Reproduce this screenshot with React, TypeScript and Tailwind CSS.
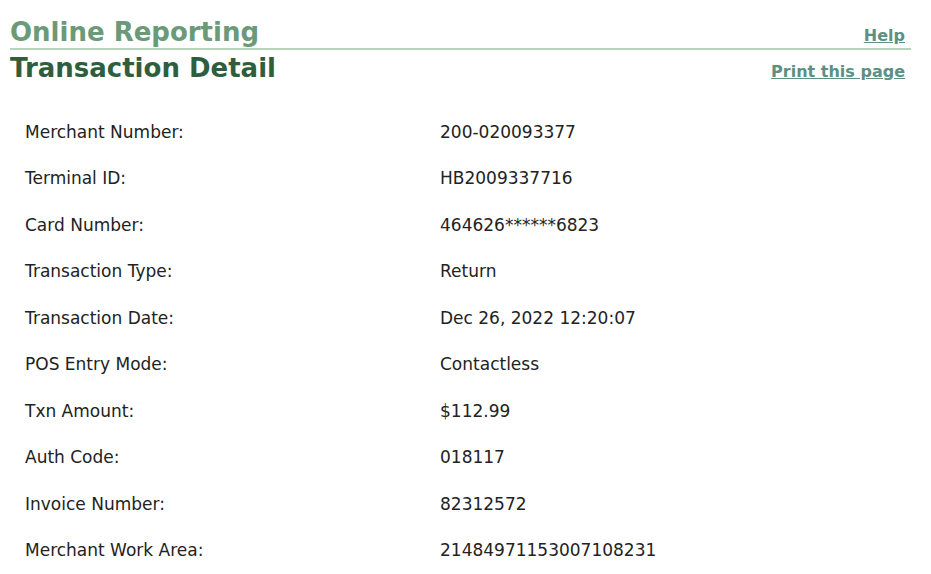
import React from "react";

const rows: [string, string][] = [
  ["Merchant Number:", "200-020093377"],
  ["Terminal ID:", "HB2009337716"],
  ["Card Number:", "464626******6823"],
  ["Transaction Type:", "Return"],
  ["Transaction Date:", "Dec 26, 2022 12:20:07"],
  ["POS Entry Mode:", "Contactless"],
  ["Txn Amount:", "$112.99"],
  ["Auth Code:", "018117"],
  ["Invoice Number:", "82312572"],
  ["Merchant Work Area:", "21484971153007108231"],
];

export default function App() {
  return (
    <div className="w-[931px] h-[574px] bg-white overflow-hidden font-['DejaVu_Sans',Verdana,sans-serif]">
      <div className="ml-[10px] w-[901px] pt-[17px]">
        <div className="flex items-baseline justify-between border-b-2 border-[#b7d4bb] h-[33px]">
          <h1 className="text-[26px] leading-[30px] font-bold text-[#6b9a78]">
            Online Reporting
          </h1>
          <a
            href="#"
            className="mr-[6px] text-[16px] font-bold text-[#5d8f82] underline"
          >
            Help
          </a>
        </div>
        <div className="flex items-baseline justify-between mt-[3px]">
          <h2 className="text-[26px] leading-[30px] font-bold text-[#2f5e3e]">
            Transaction Detail
          </h2>
          <a
            href="#"
            className="mr-[6px] text-[16px] font-bold text-[#5d8f82] underline"
          >
            Print this page
          </a>
        </div>
        <div className="mt-[25px] text-[17px] text-[#222222]">
          {rows.map(([label, value]) => (
            <div key={label} className="flex items-center h-[46.5px]">
              <div className="w-[430px] pl-[15px]">{label}</div>
              <div>{value}</div>
            </div>
          ))}
        </div>
      </div>
    </div>
  );
}
